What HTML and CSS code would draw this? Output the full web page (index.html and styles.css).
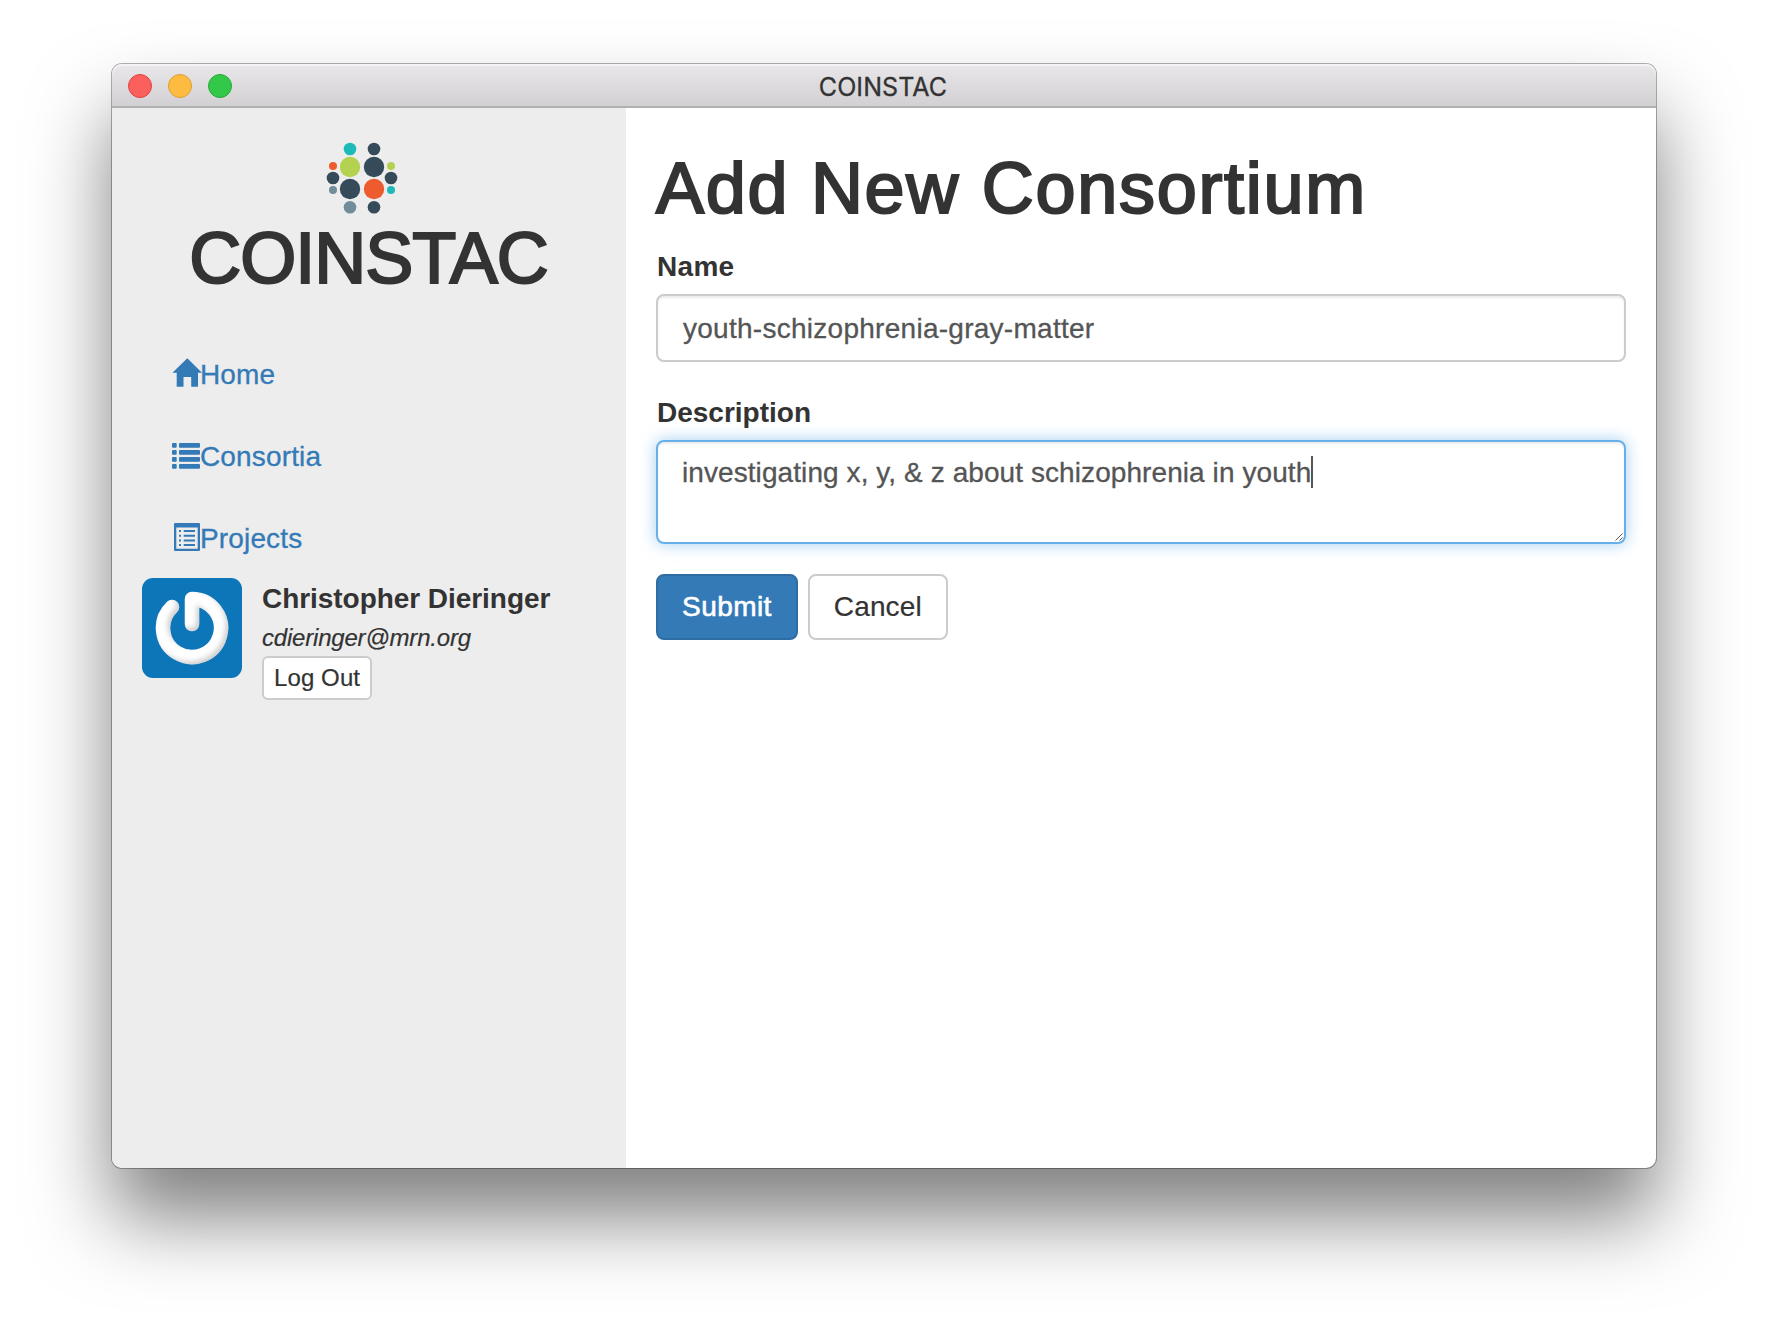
FILE: index.html
```html
<!DOCTYPE html>
<html lang="en">
<head>
<meta charset="utf-8">
<title>COINSTAC</title>
<link rel="stylesheet" href="styles.css">
</head>
<body>
<div class="window">
  <header class="titlebar">
    <div class="lights"><span class="light red"></span><span class="light yellow"></span><span class="light green"></span></div>
    <div class="title">COINSTAC</div>
  </header>
  <div class="content">
    <aside class="sidebar">
      <div class="brand">
        <svg class="logo" viewBox="0 0 72 72" width="72" height="72">
          <g fill="#364b59"><circle cx="48" cy="7" r="6.3"/><circle cx="48" cy="25" r="10.2"/><circle cx="7" cy="36" r="6.3"/><circle cx="65" cy="36" r="6.3"/><circle cx="24" cy="47" r="10.2"/><circle cx="48" cy="65.2" r="6.3"/></g>
          <g fill="#1eb9b9"><circle cx="24" cy="7" r="6.3"/><circle cx="65" cy="48" r="4"/></g>
          <g fill="#b4d24f"><circle cx="24" cy="25" r="10.2"/><circle cx="65" cy="24" r="4"/></g>
          <g fill="#ee5b2e"><circle cx="7" cy="24" r="4"/><circle cx="48" cy="47" r="10.2"/></g>
          <g fill="#728d99"><circle cx="7" cy="48" r="4"/><circle cx="24" cy="65.2" r="6.3"/></g>
        </svg>
        <h1 class="brand-name">COINSTAC</h1>
      </div>
      <nav class="nav">
        <a class="nav-link"><svg class="icon" viewBox="0 0 28 30"><path d="M15.3 0.3 L30 14.8 H26 V28.7 H19.2 V19 H11.5 V28.7 H4.7 V14.8 H0.4 Z"/></svg>Home</a>
        <a class="nav-link"><svg class="icon" viewBox="0 0 28 30"><g><rect y="3" width="4.7" height="4.7" rx="1"/><rect x="7" y="3" width="21" height="4.7" rx="1"/><rect y="10" width="4.7" height="4.7" rx="1"/><rect x="7" y="10" width="21" height="4.7" rx="1"/><rect y="17" width="4.7" height="4.7" rx="1"/><rect x="7" y="17" width="21" height="4.7" rx="1"/><rect y="24" width="4.7" height="4.7" rx="1"/><rect x="7" y="24" width="21" height="4.7" rx="1"/></g></svg>Consortia</a>
        <a class="nav-link"><svg class="icon" viewBox="0 0 28 30"><path fill-rule="evenodd" d="M3 1H27Q28 1 28 2V28Q28 29 27 29H3Q2 29 2 28V2Q2 1 3 1ZM4.3 5.4V26.7H25.7V5.4Z"/><path d="M7 8h2v2H7zM11.7 8H23v2H11.7zM7 12.8h2v2H7zM11.7 12.8H23v2H11.7zM7 17.5h2v2H7zM11.7 17.5H23v2H11.7zM7 22h2v2H7zM11.7 22H23v2H11.7z"/></svg>Projects</a>
      </nav>
      <div class="user">
        <svg class="avatar" viewBox="0 0 100 100" width="100" height="100">
          <defs><filter id="bevel" x="-20%" y="-20%" width="140%" height="140%"><feGaussianBlur in="SourceAlpha" stdDeviation="2.5" result="b"/><feOffset in="b" dx="-3" dy="-3" result="o"/><feComposite in="SourceAlpha" in2="o" operator="out" result="edge"/><feFlood flood-color="#8d8d8d" flood-opacity=".5"/><feComposite in2="edge" operator="in" result="shade"/><feMerge><feMergeNode in="SourceGraphic"/><feMergeNode in="shade"/></feMerge></filter></defs>
          <rect width="100" height="100" rx="11" fill="#0d76b9"/>
          <path d="M30 29 A29 29 0 1 0 50 21 V46" fill="none" stroke="#fff" stroke-width="14.5" stroke-linecap="round" stroke-linejoin="round" filter="url(#bevel)"/>
        </svg>
        <div class="user-info">
          <strong class="user-name">Christopher Dieringer</strong>
          <em class="user-mail">cdieringer@mrn.org</em>
          <button class="btn btn-small">Log Out</button>
        </div>
      </div>
    </aside>
    <main class="main">
      <h1 class="heading">Add New Consortium</h1>
      <div class="group"><label class="label label-name">Name</label><div class="field">youth-schizophrenia-gray-matter</div></div>
      <div class="group"><label class="label">Description</label><div class="field area focused">investigating x, y, &amp; z about schizophrenia in youth<span class="caret"></span><svg class="grip" viewBox="0 0 8 8" width="8" height="8"><path d="M.5 7.5L7.5 .5M4.5 7.5L7.5 4.5"/></svg></div></div>
      <div class="actions"><button class="btn primary">Submit</button><button class="btn cancel">Cancel</button></div>
    </main>
  </div>
</div>
</body>
</html>
```
FILE: styles.css
```css
* { box-sizing: border-box; }
body { margin: 0; padding: 64px 112px; height: 1328px; overflow: hidden; background: #fff; color: #333; font: 28px/40px "Liberation Sans", Arial, sans-serif; }
.window { width: 1544px; height: 1104px; border-radius: 10px; background: #fff; display: flex; flex-direction: column; box-shadow: 0 0 0 1px rgba(0,0,0,.3), 0 50px 80px rgba(0,0,0,.5); }
.titlebar { height: 44px; flex: none; padding-top: 2px; border-radius: 10px 10px 0 0; background: linear-gradient(#e9e7e9, #d2d0d2); border-bottom: 2px solid #b2b0b2; display: grid; grid-template-columns: 1fr auto 1fr; align-items: center; box-shadow: inset 0 2px #f4f3f4; }
.lights { display: flex; gap: 16px; padding-left: 16px; }
.light { width: 24px; height: 24px; border-radius: 50%; border: 1px solid; }
.red { background: #fc605c; border-color: #e0443f; }
.yellow { background: #fdbc40; border-color: #de9f33; }
.green { background: #34c84a; border-color: #25a934; }
.title { font: 25px/38px Inter, sans-serif; padding: 2px 2px 0 0; letter-spacing: .1px; -webkit-text-stroke: .3px; }
.content { flex: 1; display: flex; }
.sidebar { width: 514px; flex: none; background: #ededed; border-radius: 0 0 0 10px; padding: 34px 30px 0; }
.brand { display: flex; flex-direction: column; align-items: center; }
.logo { margin: 0 14px 5px 0; }
h1 { margin: 0; font-size: 72px; line-height: 79px; font-weight: 500; -webkit-text-stroke: 2.2px; white-space: nowrap; }
.brand-name { letter-spacing: -1px; padding-right: 1px; }
.heading { margin-bottom: 19px; letter-spacing: 1.7px; }
.nav { display: flex; flex-direction: column; gap: 2px; padding-top: 36px; }
.nav-link { display: flex; padding: 21px 30px 19px; color: #337ab7; letter-spacing: .15px; -webkit-text-stroke: .3px; }
.icon { width: 28px; height: 30px; margin-top: 2.5px; fill: currentColor; stroke: none; overflow: visible; }
.user { display: flex; gap: 20px; }
.user-info { display: flex; flex-direction: column; align-items: flex-start; }
.user-name { padding-top: 1px; letter-spacing: -.05px; }
.user-mail { font-size: 24px; line-height: 37px; letter-spacing: -.2px; -webkit-text-stroke: .2px; }
.btn { font: inherit; color: #333; background: #fff; border: 2px solid #ccc; border-radius: 8px; height: 66px; padding: 0 24px; -webkit-text-stroke: .2px; }
.btn-small { font-size: 24px; height: 44px; padding: 0 10px; border-radius: 6px; letter-spacing: .1px; }
.primary { background: #337ab7; border-color: #2e6da4; color: #fff; letter-spacing: .45px; -webkit-text-stroke: .6px; }
.cancel { letter-spacing: .13px; }
.main { flex: 1; padding: 41px 30px 0; }
.label { display: block; font-weight: 700; margin-bottom: 7px; padding-left: 1px; }
.label-name { letter-spacing: .3px; }
.group { margin-bottom: 30px; }
.group + .group { padding-top: 1px; }
.field { height: 68px; border: 2px solid #ccc; border-radius: 8px; padding: 13px 24px 0 25px; color: #555; letter-spacing: .27px; box-shadow: inset 0 2px 2px rgba(0,0,0,.075); -webkit-text-stroke: .3px; }
.area { position: relative; height: 104px; padding: 11px 24px; letter-spacing: .08px; }
.focused { border-color: #66afe9; box-shadow: inset 0 2px 2px rgba(0,0,0,.075), 0 0 16px rgba(102,175,233,.6); }
.caret { display: inline-block; width: 2px; height: 32px; background: #555; vertical-align: -6px; }
.grip { position: absolute; right: 1px; bottom: 1px; fill: none; stroke: #555; stroke-width: 1; }
.actions { display: flex; gap: 10px; }
```
